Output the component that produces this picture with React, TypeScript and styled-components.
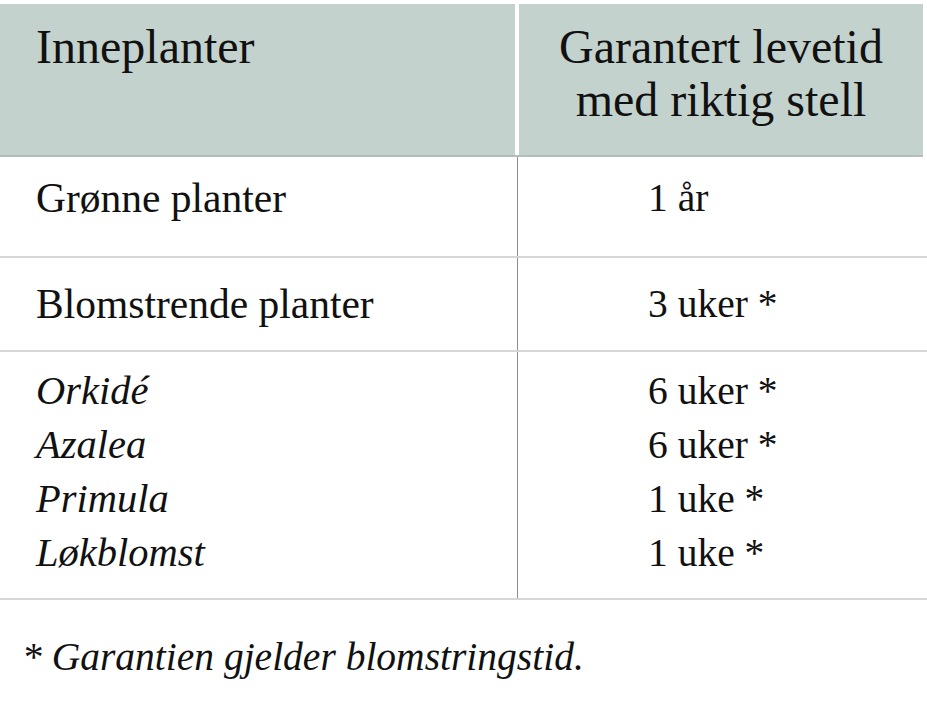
import React from "react";
import styled, { createGlobalStyle } from "styled-components";

const GlobalStyle = createGlobalStyle`
  html, body {
    margin: 0;
    padding: 0;
    background: #ffffff;
  }
  body {
    font-family: "Liberation Serif", "Times New Roman", serif;
    color: #111111;
  }
`;

const Page = styled.div`
  width: 927px;
  padding-top: 4px;
`;

const HeaderRow = styled.div`
  display: grid;
  grid-template-columns: 515px 404px;
  column-gap: 4px;
  height: 153px;
  border-bottom: 2px solid #b3bdb9;
  width: 923px;
  box-sizing: border-box;
`;

const HeaderCell = styled.div<{ $center?: boolean }>`
  background: #c4d2cd;
  font-size: 48px;
  line-height: 53px;
  padding: ${(p) => (p.$center ? "16px 0 0 0" : "16px 0 0 36px")};
  text-align: ${(p) => (p.$center ? "center" : "left")};
`;

const Row = styled.div<{ $height: number }>`
  display: grid;
  grid-template-columns: 517px 1fr;
  height: ${(p) => p.$height}px;
  border-bottom: 2px solid #d6d6d6;
  box-sizing: border-box;
`;

const NameCell = styled.div<{ $top: number; $italic?: boolean }>`
  padding: ${(p) => p.$top}px 0 0 36px;
  font-size: ${(p) => (p.$italic ? 40.5 : 41.5)}px;
  font-style: ${(p) => (p.$italic ? "italic" : "normal")};
  line-height: 54px;
`;

const ValueCell = styled.div<{ $top: number }>`
  border-left: 1px solid #8c8c8c;
  padding: ${(p) => p.$top}px 0 0 130px;
  font-size: 39.5px;
  line-height: 54px;
`;

const Line = styled.div``;

const Footnote = styled.div`
  padding: 34px 0 0 22px;
  font-size: 39.5px;
  font-style: italic;
  line-height: 46px;
`;

const groups = [
  { names: ["Grønne planter"], values: ["1 år"], italic: false, height: 101, top: 14 },
  { names: ["Blomstrende planter"], values: ["3 uker *"], italic: false, height: 94, top: 19 },
  {
    names: ["Orkidé", "Azalea", "Primula", "Løkblomst"],
    values: ["6 uker *", "6 uker *", "1 uke *", "1 uke *"],
    italic: true,
    height: 248,
    top: 12,
  },
];

const App: React.FC = () => {
  return (
    <Page>
      <GlobalStyle />
      <HeaderRow>
        <HeaderCell>Inneplanter</HeaderCell>
        <HeaderCell $center>
          Garantert levetid
          <br />
          med riktig stell
        </HeaderCell>
      </HeaderRow>
      {groups.map((g, i) => (
        <Row key={i} $height={g.height}>
          <NameCell $top={g.top} $italic={g.italic}>
            {g.names.map((n) => (
              <Line key={n}>{n}</Line>
            ))}
          </NameCell>
          <ValueCell $top={g.top}>
            {g.values.map((v, j) => (
              <Line key={j}>{v}</Line>
            ))}
          </ValueCell>
        </Row>
      ))}
      <Footnote>* Garantien gjelder blomstringstid.</Footnote>
    </Page>
  );
};

export default App;
